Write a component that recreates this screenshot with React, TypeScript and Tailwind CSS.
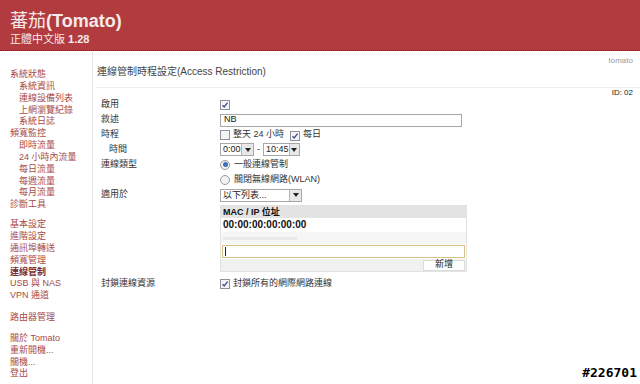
import React from "react";

const F = { fontFamily: '"Liberation Sans", "Noto Sans CJK TC", sans-serif' };

function Check({ on }: { on?: boolean }) {
  return (
    <span className="inline-flex h-[10px] w-[10px] items-center justify-center border border-[#8f8f9d] bg-[#f4f4f4]">
      {on && (
        <svg width="8" height="8" viewBox="0 0 8 8">
          <path d="M1.5 4.2 L3.2 6 L6.6 1.6" fill="none" stroke="#3a4d8f" strokeWidth="1.3" />
        </svg>
      )}
    </span>
  );
}

function Radio({ on }: { on?: boolean }) {
  return (
    <span className="inline-flex h-[10px] w-[10px] items-center justify-center rounded-full border border-[#9a9a9a] bg-[#f2f2f2]">
      {on && <span className="h-[5px] w-[5px] rounded-full bg-[#3d6fb8]" />}
    </span>
  );
}

function Select({ value, w }: { value: string; w: string }) {
  return (
    <span className={`inline-flex h-[13px] items-center border border-[#a8a8a8] bg-white ${w}`}>
      <span className="flex-1 pl-[2px] text-[9px] leading-[11px] text-[#222]">{value}</span>
      <span className="flex h-[11px] w-[12px] items-center justify-center border-l border-[#b5b5b5] bg-[#e8e8e8]">
        <svg width="6" height="4" viewBox="0 0 6 4">
          <path d="M0 0 H6 L3 4 Z" fill="#222" />
        </svg>
      </span>
    </span>
  );
}

const sideTop = [
  ["系統狀態", 0],
  ["系統資訊", 1],
  ["連線設備列表", 1],
  ["上網瀏覽紀錄", 1],
  ["系統日誌", 1],
  ["頻寬監控", 0],
  ["即時流量", 1],
  ["24 小時內流量", 1],
  ["每日流量", 1],
  ["每週流量", 1],
  ["每月流量", 1],
  ["診斷工具", 0],
] as const;

const sideMid = ["基本設定", "進階設定", "通訊埠轉送", "頻寬管理", "連線管制", "USB 與 NAS", "VPN 通道"];
const sideEnd = ["關於 Tomato", "重新開機...", "關機...", "登出"];

function Label({ children, indent }: { children?: React.ReactNode; indent?: boolean }) {
  return (
    <div className={`w-[119px] shrink-0 text-[9px] text-[#333] ${indent ? "pl-[8px]" : ""}`}>{children}</div>
  );
}

export default function App() {
  return (
    <div className="relative h-[384px] w-[640px] overflow-hidden bg-white" style={F}>
      <div className="h-[51px] border-b border-dotted border-[#7a1f22] bg-[#b13b3f] pl-[10px] pt-[8px]">
        <div className="text-[18px] font-bold leading-[22px] text-[#f6eaea]">
          <span className="font-normal" style={{ fontFamily: '"Noto Sans CJK TC", serif' }}>蕃茄</span>(Tomato)
        </div>
        <div className="text-[11px] leading-[14px] text-[#f6eaea]">
          正體中文版 <span className="font-bold">1.28</span>
        </div>
      </div>
      <div className="flex h-[333px]">
        <div className="w-[93px] shrink-0 border-r border-[#e4e4e4] pl-[10px] pt-[18px] text-[9px] leading-[11.85px] text-[#a84a48]">
          {sideTop.map(([t, i]) => (
            <div key={t} className={i ? "pl-[9px]" : ""}>{t}</div>
          ))}
          <div className="h-[8px]" />
          {sideMid.map((t) => (
            <div key={t} className={t === "連線管制" ? "font-bold text-[#7a2a2a]" : ""}>{t}</div>
          ))}
          <div className="h-[10px]" />
          <div>路由器管理</div>
          <div className="h-[9px]" />
          {sideEnd.map((t) => (
            <div key={t}>{t}</div>
          ))}
        </div>
        <div className="flex-1 pl-[3px]">
          <div className="mt-[5px] h-[10px] pr-[7px] text-right text-[8px] leading-[10px] text-[#9a9a9a]">tomato</div>
          <div className="border-b border-[#ececec] pb-[9px] pl-[1px] text-[10px] leading-[12px] text-[#444]">
            連線管制時程設定(Access Restriction)
          </div>
          <div className="h-[9px] pr-[7px] text-right text-[8px] leading-[9px] text-[#222]">ID: 02</div>
          <div className="pl-[5px]">
            <div className="flex h-[15px] items-center">
              <Label>啟用</Label>
              <Check on />
            </div>
            <div className="flex h-[16px] items-center">
              <Label>敘述</Label>
              <span className="flex h-[13px] w-[242px] items-center border border-[#a8a8a8] pl-[3px] text-[9px] text-[#111]">NB</span>
            </div>
            <div className="flex h-[14px] items-center">
              <Label>時程</Label>
              <Check />
              <span className="ml-[3px] text-[9px] text-[#333]">整天 24 小時</span>
              <span className="ml-[6px]"><Check on /></span>
              <span className="ml-[3px] text-[9px] text-[#333]">每日</span>
            </div>
            <div className="flex h-[15px] items-center">
              <Label indent>時間</Label>
              <Select value="0:00" w="w-[34px]" />
              <span className="mx-[3px] text-[9px] text-[#333]">-</span>
              <Select value="10:45" w="w-[37px]" />
            </div>
            <div className="flex h-[15px] items-center">
              <Label>連線類型</Label>
              <Radio on />
              <span className="ml-[4px] text-[9px] text-[#333]">一般連線管制</span>
            </div>
            <div className="flex h-[15px] items-center">
              <Label />
              <Radio />
              <span className="ml-[4px] text-[9px] text-[#333]">關閉無線網路(WLAN)</span>
            </div>
            <div className="flex h-[16px] items-center">
              <Label>適用於</Label>
              <Select value="以下列表..." w="w-[82px]" />
            </div>
            <div className="mt-[2px] flex">
              <Label />
              <div className="w-[247px] border border-[#e2e2e2]">
                <div className="h-[12px] bg-[#e3e3e3] pl-[2px] text-[9px] font-bold leading-[12px] text-[#111]">MAC / IP 位址</div>
                <div className="h-[14px] bg-white pl-[2px] text-[10px] font-bold leading-[14px] text-[#111]">00:00:00:00:00:00</div>
                <div className="flex h-[12px] items-center bg-[#f6f6f6] pl-[2px]">
                  <div className="h-[3px] w-[74px] bg-[#e9e9e9]" />
                </div>
                <div className="bg-white px-[1px] py-[1px]">
                  <div className="flex h-[13px] items-center border border-[#d8c088] bg-white pl-[2px]">
                    <div className="h-[9px] w-px bg-[#222]" />
                  </div>
                </div>
                <div className="flex h-[12px] items-center justify-end bg-[#f1f1f1] pr-[1px]">
                  <span className="flex h-[11px] w-[42px] items-center justify-center border border-[#dcdcdc] bg-white text-[9px] text-[#222]">新增</span>
                </div>
              </div>
            </div>
            <div className="mt-[5px] flex h-[14px] items-center">
              <Label>封鎖連線資源</Label>
              <Check on />
              <span className="ml-[3px] text-[9px] text-[#333]">封鎖所有的網際網路連線</span>
            </div>
          </div>
        </div>
      </div>
      <div className="absolute bottom-[2px] right-[3px] text-[13px] font-bold text-black [text-shadow:1px_0_0_#fff,-1px_0_0_#fff,0_1px_0_#fff,0_-1px_0_#fff]" style={{ fontFamily: '"DejaVu Sans Mono", monospace' }}>
        #226701
      </div>
    </div>
  );
}
